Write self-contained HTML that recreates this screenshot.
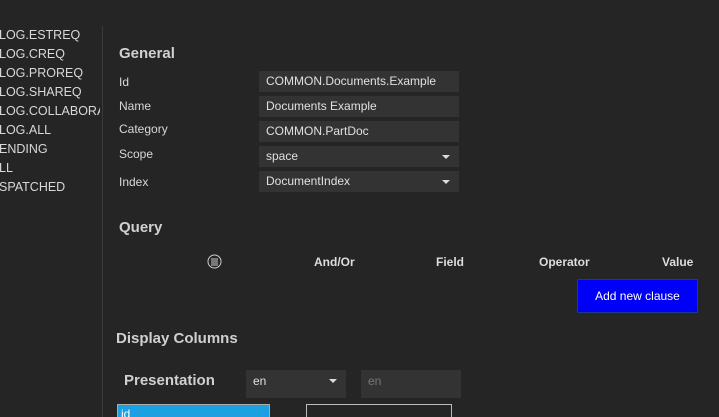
<!DOCTYPE html>
<html style="overflow:hidden;height:417px"><head><style>
body{margin:0;width:719px;height:417px;background:#252525;font-family:"Liberation Sans",sans-serif;color:#d8d8d8;overflow:hidden;position:relative}
.a{position:absolute;white-space:nowrap}
.l{font-size:12.5px;left:-1px}
.lab{font-size:12px;left:119px}
.f{position:absolute;left:259px;width:200px;height:21px;background:#333;font-size:12px;line-height:21px;box-sizing:border-box;padding-left:7px;color:#e0e0e0}
.dd::after{content:"";position:absolute;right:9px;top:9px;border-left:4px solid transparent;border-right:4px solid transparent;border-top:4px solid #ddd}
h2{position:absolute;margin:0;font-size:15px;font-weight:bold;color:#d0d0d0}
.th{position:absolute;top:255px;font-size:12px;font-weight:bold;color:#ddd}
</style></head><body>
<div class="a l" style="top:28px">LOG.ESTREQ</div>
<div class="a l" style="top:47px">LOG.CREQ</div>
<div class="a l" style="top:66px">LOG.PROREQ</div>
<div class="a l" style="top:85px">LOG.SHAREQ</div>
<div class="a l" style="top:104px;width:101px;overflow:hidden">LOG.COLLABORATIVE</div>
<div class="a l" style="top:123px">LOG.ALL</div>
<div class="a l" style="top:142px">ENDING</div>
<div class="a l" style="top:161px">LL</div>
<div class="a l" style="top:180px">SPATCHED</div>
<div class="a" style="left:102px;top:26px;width:1px;height:391px;background:#3a3a3a"></div>
<h2 style="left:119px;top:45px">General</h2>
<div class="a lab" style="top:75px">Id</div>
<div class="a lab" style="top:99px">Name</div>
<div class="a lab" style="top:122px">Category</div>
<div class="a lab" style="top:147px">Scope</div>
<div class="a lab" style="top:175px">Index</div>
<div class="f" style="top:71px">COMMON.Documents.Example</div>
<div class="f" style="top:96px">Documents Example</div>
<div class="f" style="top:121px">COMMON.PartDoc</div>
<div class="f dd" style="top:146px">space</div>
<div class="f dd" style="top:171px">DocumentIndex</div>
<h2 style="left:119px;top:219px">Query</h2>
<svg class="a" style="left:207px;top:254px" width="15" height="15"><circle cx="7.5" cy="7.5" r="6.5" fill="none" stroke="#ccc"/><path d="M4 5h7M4 7h7M4 9h7M4 11h7" stroke="#ccc" stroke-width="1"/></svg>
<div class="th" style="left:314px">And/Or</div>
<div class="th" style="left:436px">Field</div>
<div class="th" style="left:539px">Operator</div>
<div class="th" style="left:662px">Value</div>
<div class="a" style="left:577px;top:279px;width:121px;height:34px;background:#0000f8;border:1px solid #1b3a8a;box-sizing:border-box;color:#fff;font-size:12px;line-height:32px;text-align:center">Add new clause</div>
<h2 style="left:116px;top:330px">Display Columns</h2>
<div class="a" style="left:124px;top:372px;font-size:15px;font-weight:bold;color:#d0d0d0">Presentation</div>
<div class="f dd" style="left:246px;top:370px;width:100px;height:28px;line-height:22px;padding-left:7px">en</div>
<div class="f" style="left:361px;top:370px;width:100px;height:28px;line-height:22px;padding-left:7px;color:#777">en</div>
<div class="a" style="left:117px;top:404px;width:153px;height:13px;background:#1ba1e2;border:1px solid #aaa;border-bottom:none;box-sizing:border-box;color:#fff;font-size:12px;padding-left:3px;line-height:18px;overflow:hidden">id</div>
<div class="a" style="left:306px;top:404px;width:146px;height:13px;border:1px solid #bbb;border-bottom:none;box-sizing:border-box"></div>
</body></html>
